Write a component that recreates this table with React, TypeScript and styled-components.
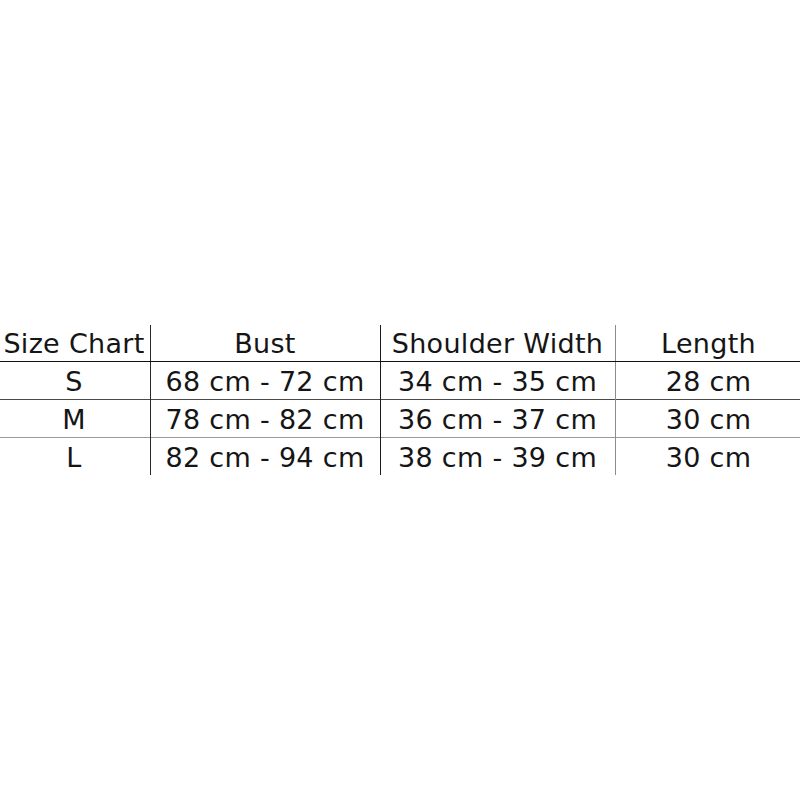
import React from "react";
import styled, { createGlobalStyle } from "styled-components";

const GlobalStyle = createGlobalStyle`
  html, body {
    margin: 0;
    padding: 0;
    background: #ffffff;
  }
`;

const Page = styled.div`
  width: 800px;
  height: 800px;
  display: flex;
  align-items: center;
  justify-content: center;
  background: #fff;
`;

const Table = styled.table`
  width: 800px;
  border-collapse: collapse;
  table-layout: fixed;
  font-family: "DejaVu Sans", "Open Sans", sans-serif;
  font-size: 27px;
  letter-spacing: 0.3px;
  color: #151515;
`;

const HeadCell = styled.th<{ $w: number; $line?: string }>`
  width: ${(p) => p.$w}px;
  height: 36px;
  padding: 0;
  font-weight: normal;
  text-align: center;
  white-space: nowrap;
  border-bottom: 1px solid #111;
  border-right: ${(p) => (p.$line ? `1px solid ${p.$line}` : "none")};
`;

const Row = styled.tr<{ $line?: string }>`
  border-bottom: ${(p) => (p.$line ? `1px solid ${p.$line}` : "none")};
`;

const Cell = styled.td<{ $line?: string }>`
  height: 36px;
  padding: 1px 0 0;
  text-align: center;
  white-space: nowrap;
  border-right: ${(p) => (p.$line ? `1px solid ${p.$line}` : "none")};
`;

const columns = [
  { title: "Size Chart", w: 151, line: "#2a2a2a" },
  { title: "Bust", w: 229, line: "#1a1a1a" },
  { title: "Shoulder Width", w: 234, line: "#8c8c8c" },
  { title: "Length", w: 186 },
];

const rows = [
  { cells: ["S", "68 cm - 72 cm", "34 cm - 35 cm", "28 cm"], line: "#4a4a4a" },
  { cells: ["M", "78 cm - 82 cm", "36 cm - 37 cm", "30 cm"], line: "#9a9a9a" },
  { cells: ["L", "82 cm - 94 cm", "38 cm - 39 cm", "30 cm"] },
];

export default function App() {
  return (
    <Page>
      <GlobalStyle />
      <Table>
        <thead>
          <tr>
            {columns.map((c) => (
              <HeadCell key={c.title} $w={c.w} $line={c.line}>
                {c.title}
              </HeadCell>
            ))}
          </tr>
        </thead>
        <tbody>
          {rows.map((r) => (
            <Row key={r.cells[0]} $line={r.line}>
              {r.cells.map((text, i) => (
                <Cell key={i} $line={columns[i].line}>
                  {text}
                </Cell>
              ))}
            </Row>
          ))}
        </tbody>
      </Table>
    </Page>
  );
}
